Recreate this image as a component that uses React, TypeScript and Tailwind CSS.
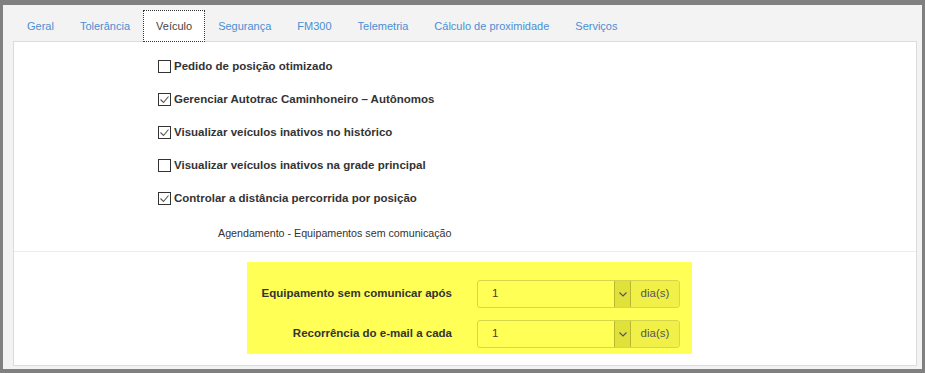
import React from 'react';

const tabs = ['Geral', 'Tolerância', 'Veículo', 'Segurança', 'FM300', 'Telemetria', 'Cálculo de proximidade', 'Serviços'];

const options = [
  { label: 'Pedido de posição otimizado', checked: false },
  { label: 'Gerenciar Autotrac Caminhoneiro – Autônomos', checked: true },
  { label: 'Visualizar veículos inativos no histórico', checked: true },
  { label: 'Visualizar veículos inativos na grade principal', checked: false },
  { label: 'Controlar a distância percorrida por posição', checked: true },
];

const Checkbox = ({ checked }: { checked: boolean }) => (
  <span className="w-[13px] h-[13px] border border-[#333] bg-white flex items-center justify-center shrink-0">
    {checked && (
      <svg width="11" height="11" viewBox="0 0 11 11">
        <polyline points="1.5,5.5 4.5,8.5 9.5,2.5" fill="none" stroke="#555" strokeWidth="1.1" />
      </svg>
    )}
  </span>
);

const SelectRow = ({ label }: { label: string }) => (
  <div className="flex items-center h-[28px]">
    <span className="w-[205px] text-right font-bold text-[11.5px] text-[#333]">{label}</span>
    <div className="ml-[25px] flex h-[28px] border border-[#d6d64a] rounded-[3px] overflow-hidden">
      <div className="w-[136px] flex items-center pl-[14px] text-[11.5px] text-[#5a3a30]">1</div>
      <div className="w-[17px] bg-[#e1e13c] border-x border-[#b9b92e] flex items-center justify-center">
        <svg width="10" height="7" viewBox="0 0 10 7">
          <polyline points="1.5,1.5 5,5 8.5,1.5" fill="none" stroke="#555" strokeWidth="1.1" />
        </svg>
      </div>
      <div className="w-[48px] bg-[#f0f048] flex items-center justify-center text-[11.5px] text-[#555]">dia(s)</div>
    </div>
  </div>
);

export default function App() {
  return (
    <div className="w-[925px] h-[373px] bg-[#808080] pt-[5px] pl-[3px] pr-[3px] pb-[4px] font-['Liberation_Sans',Arial,sans-serif]">
      <div className="h-full bg-[#f3f3f3] flex flex-col pt-[5px] pl-[10px] pr-[5px] pb-[3px]">
        <div className="flex h-[32px] pl-[1px] relative z-10 -mb-px">
          {tabs.map((t) =>
            t === 'Veículo' ? (
              <div key={t} className="h-[32px] px-[12px] flex items-center bg-white border border-dotted border-[#333] text-[11px] text-[#444]">
                {t}
              </div>
            ) : (
              <div key={t} className="h-[32px] px-[13px] flex items-center text-[11px] text-[#4a8fd4]">
                {t}
              </div>
            )
          )}
        </div>
        <div className="flex-1 bg-white border border-[#dcdcdc] flex flex-col">
          <div className="pt-[8px] pl-[144px] flex flex-col">
            {options.map((o) => (
              <div key={o.label} className="h-[33px] flex items-center gap-[3px]">
                <Checkbox checked={o.checked} />
                <span className="font-bold text-[11.5px] text-[#333]">{o.label}</span>
              </div>
            ))}
            <div className="h-[36px] flex items-center pl-[60px] text-[10.7px] text-[#333]">
              Agendamento - Equipamentos sem comunicação
            </div>
          </div>
          <div className="border-t border-[#ececec]" />
          <div className="mt-[10px] ml-[233px] w-[445px] h-[92px] bg-[#ffff55] pt-[18px] flex flex-col gap-[12px]">
            <SelectRow label="Equipamento sem comunicar após" />
            <SelectRow label="Recorrência do e-mail a cada" />
          </div>
        </div>
      </div>
    </div>
  );
}
